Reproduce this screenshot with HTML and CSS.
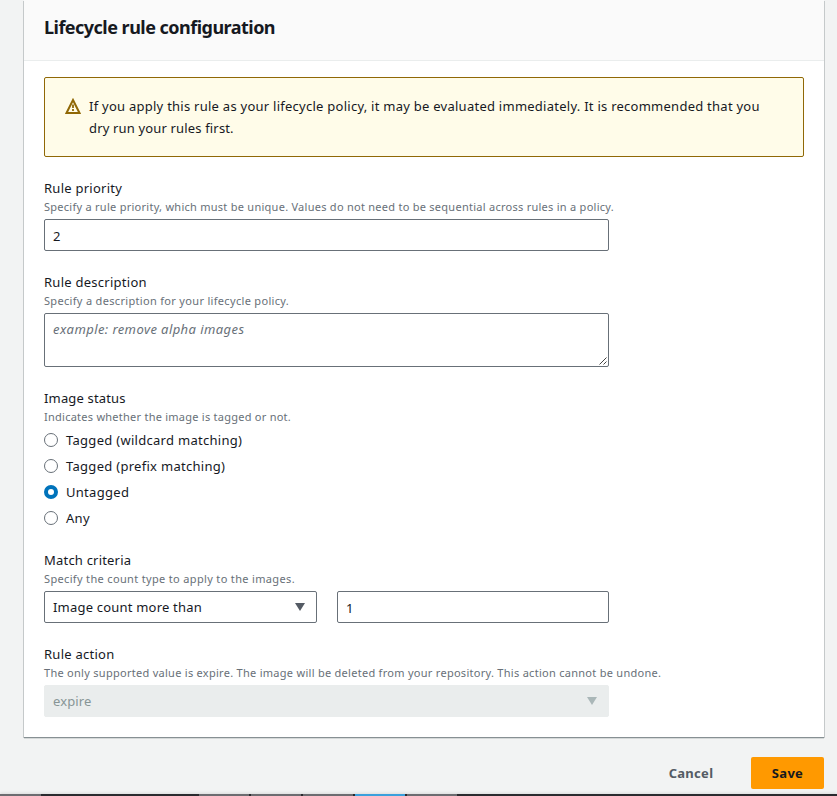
FILE: index.html
```html
<!DOCTYPE html>
<html lang="en">
<head>
<meta charset="utf-8">
<title>Lifecycle rule configuration</title>
<link rel="stylesheet" href="styles.css">
</head>
<body>
<main class="page">
  <section class="card">
    <header class="card-header"><h2><span class="t-title">Lifecycle rule configuration</span></h2></header>
    <div class="card-body">
      <div class="alert">
        <svg class="alert-icon" width="16" height="16" viewBox="0 0 16 16" fill="none" stroke="#906806" stroke-width="2"><path d="M8 2 14.5 15H1.500Z"/><path stroke-width="1.800" d="M8 6.500v3.500M8 11v2"/></svg>
        <p><span class="t-a1">If you apply this rule as your lifecycle policy, it may be evaluated immediately. It is recommended that you</span><br><span class="t-a2">dry run your rules first.</span></p>
      </div>
      <div class="field">
        <div class="label"><span class="t-l1">Rule priority</span></div>
        <div class="hint"><span class="t-h1">Specify a rule priority, which must be unique. Values do not need to be sequential across rules in a policy.</span></div>
        <div class="control digit">2</div>
      </div>
      <div class="field">
        <div class="label"><span class="t-l2">Rule description</span></div>
        <div class="hint"><span class="t-h2">Specify a description for your lifecycle policy.</span></div>
        <div class="control textarea"><span class="t-ph">example: remove alpha images</span>
          <svg class="grip" width="8" height="8" viewBox="0 0 8 8" stroke="#444" fill="none"><path d="M.5 7.5l7-7M4.500 7.500l3-3"/></svg>
        </div>
      </div>
      <div class="field">
        <div class="label"><span class="t-l3">Image status</span></div>
        <div class="hint"><span class="t-h3">Indicates whether the image is tagged or not.</span></div>
        <div class="radios">
          <div class="radio"><i class="dot"></i><span class="t-r1">Tagged (wildcard matching)</span></div>
          <div class="radio"><i class="dot"></i><span class="t-r2">Tagged (prefix matching)</span></div>
          <div class="radio"><i class="dot checked"></i><span class="t-r3">Untagged</span></div>
          <div class="radio"><i class="dot"></i><span class="t-r4">Any</span></div>
        </div>
      </div>
      <div class="field">
        <div class="label"><span class="t-l4">Match criteria</span></div>
        <div class="hint"><span class="t-h4">Specify the count type to apply to the images.</span></div>
        <div class="split">
          <div class="control select"><span class="t-s1">Image count more than</span><svg width="10" height="8" viewBox="0 0 10 8"><path d="M0 0h10L5 8Z" fill="#545b64"/></svg></div>
          <div class="control digit">1</div>
        </div>
      </div>
      <div class="field">
        <div class="label"><span class="t-l5">Rule action</span></div>
        <div class="hint"><span class="t-h5">The only supported value is expire. The image will be deleted from your repository. This action cannot be undone.</span></div>
        <div class="control select disabled"><span class="t-s2">expire</span><svg width="10" height="8" viewBox="0 0 10 8"><path d="M0 0h10L5 8Z" fill="#aab7b8"/></svg></div>
      </div>
    </div>
  </section>
  <footer class="actions">
    <button class="btn"><span class="t-b1">Cancel</span></button>
    <button class="btn primary"><span class="t-b2">Save</span></button>
  </footer>
  <div class="taskbar"><i class="task first"></i><i class="task second"></i><i class="task"></i><i class="task"></i><i class="task active"></i><i class="task"></i></div>
</main>
</body>
</html>
```
FILE: styles.css
```css
* { box-sizing: border-box; }
body { margin: 0; background: #f2f3f3; color: #16191f; font: 13px/22px "Noto Sans", sans-serif; }
.page { height: 796px; overflow: hidden; display: flex; flex-direction: column; white-space: nowrap; }
.card { width: 800px; height: 737px; margin-left: 24px; background: #fff; box-shadow: 0 1px 0 0 #879093, 1px 1px 0 0 #c5c9ca, -1px 1px 0 0 #c5c9ca, 0 2px 0 0 #d5d9d9; }
.card-header { height: 61px; padding: 16px 20px 0; background: #fafafa; border-bottom: 1px solid #eaeded; }
h2 { margin: 0; font-size: 18px; line-height: 22px; font-weight: 700; }
.card-body { padding: 16px 20px 20px; }
.alert { display: flex; gap: 8px; height: 80px; margin-bottom: 20px; padding: 17px 20px; border: 1px solid #906806; border-radius: 2px; background: #fffce9; }
.alert-icon { margin-top: 3px; flex: none; }
.alert p { margin: 0; }
.field { margin-bottom: 20px; }
.label { height: 22px; }
.hint { height: 20px; font-size: 11px; line-height: 16px; color: #687078; }
.control { width: 565px; height: 32px; padding: 4px 8px 0; line-height: 22px; border: 1px solid #687078; border-radius: 2px; background: #fff; }
.digit { padding-top: 5px; }
.textarea { position: relative; height: 54px; color: #687078; font-style: italic; }
.grip { position: absolute; right: 1px; bottom: 1px; }
.radios { display: flex; flex-direction: column; gap: 4px; }
.radio { display: flex; align-items: center; gap: 8px; height: 22px; }
.dot { width: 14px; height: 14px; border: 1px solid #687078; border-radius: 50%; background: #fff; }
.dot.checked { border: 4px solid #0073bb; }
.split { display: flex; gap: 20px; }
.split .control { width: 272px; }
.split .select { width: 273px; }
.select { display: flex; justify-content: space-between; padding-right: 11px; }
.select svg { margin-top: 7px; }
.disabled { background: #eaeded; border-color: #eaeded; color: #879596; }
.actions { display: flex; justify-content: flex-end; margin: 20px 13px 5px 0; height: 32px; }
.btn { height: 32px; width: 120px; padding: 0; border: 0; border-radius: 2px; background: none; color: #545b64; font: 700 13px/32px "Noto Sans", sans-serif; }
.btn.primary { width: 73px; background: #ff9900; color: #16191f; }
.taskbar { display: flex; gap: 2px; height: 2px; background: #2a2a2e; box-shadow: 0 -1px 3px rgba(0,0,0,.12); }
.task { width: 50px; background: #6c6c70; }
.task.first { width: 41px; margin-right: 156px; }
.task.active { background: #3ba0dc; }

/* Tracking per text run */
.t-title { letter-spacing: -.52px; }
.t-a1 { letter-spacing: .255px; }
.t-a2 { letter-spacing: .16px; }
.t-l1, .t-l2, .t-l5 { letter-spacing: .26px; }
.t-l3 { letter-spacing: .16px; }
.t-l4, .t-s1 { letter-spacing: .2px; }
.t-h1 { letter-spacing: .265px; }
.t-h2 { letter-spacing: .32px; }
.t-h3 { letter-spacing: .25px; }
.t-h4 { letter-spacing: .34px; }
.t-h5 { letter-spacing: .28px; }
.t-ph { letter-spacing: .42px; }
.t-r1, .t-r2, .t-r3, .t-r4 { letter-spacing: .29px; }
.t-s2 { letter-spacing: .1px; }
.t-b1, .t-b2 { letter-spacing: .3px; }
```
